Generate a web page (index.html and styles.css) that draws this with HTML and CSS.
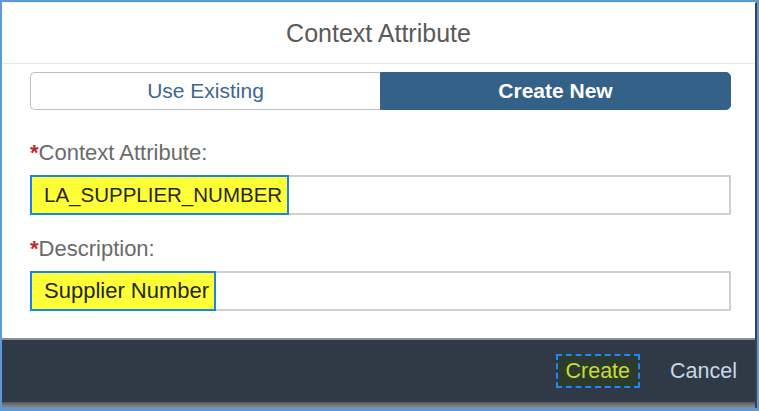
FILE: index.html
```html
<!DOCTYPE html>
<html lang="en">
<head>
  <meta charset="UTF-8" />
  <title>Context Attribute</title>
  <link rel="stylesheet" href="styles.css">
</head>
<body>

<div class="frame">
  <div class="dialog">
    <!-- Header -->
    <div class="dialog-header">Context Attribute</div>

    <!-- Content -->
    <div class="dialog-content">
      <div class="segmented">
        <button class="seg-btn">Use Existing</button>
        <button class="seg-btn selected">Create New</button>
      </div>

      <label class="field-label"><span class="req">*</span>Context Attribute:</label>
      <div class="field-input">
        <span class="highlight code">LA_SUPPLIER_NUMBER</span>
      </div>

      <label class="field-label"><span class="req">*</span>Description:</label>
      <div class="field-input">
        <span class="highlight">Supplier Number</span>
      </div>
    </div>

    <!-- Footer -->
    <div class="dialog-footer">
      <button class="footer-btn create">Create</button>
      <button class="footer-btn cancel">Cancel</button>
    </div>
    <div class="footer-shadow"></div>
  </div>
</div>

</body>
</html>
```

FILE: styles.css
```css
body {
  margin: 0;
  padding: 0;
  font-family: "Liberation Sans", Arial, sans-serif;
  background: #ffffff;
}
.frame {
  width: 759px;
  height: 411px;
  box-sizing: border-box;
  border: 2px solid #5b9ad8;
  border-bottom-width: 3px;
  background: #ffffff;
}
.dialog {
  height: 100%;
  display: flex;
  flex-direction: column;
  border-right: 2px solid #3c4048;
  border-top: 1px solid #eeeeee;
  box-sizing: border-box;
}
.dialog-header {
  height: 60px;
  display: flex;
  align-items: center;
  justify-content: center;
  font-size: 25px;
  color: #5a5a5a;
  border-bottom: 1px solid #e6e6e6;
}
.dialog-content {
  flex: 1;
  padding: 8px 24px 0 28px;
}
.segmented {
  display: flex;
  height: 38px;
}
.seg-btn {
  flex: 1;
  font-family: inherit;
  font-size: 21px;
  border: 1px solid #bfbfbf;
  background: #ffffff;
  color: #3d6890;
  padding: 0;
  margin: 0;
}
.seg-btn:first-child {
  border-radius: 5px 0 0 5px;
  border-right: none;
}
.seg-btn.selected {
  background: #346187;
  border-color: #346187;
  color: #ffffff;
  font-weight: bold;
  border-radius: 0 5px 5px 0;
}
.field-label {
  display: block;
  margin-top: 31px;
  font-size: 22px;
  color: #6a6a6a;
  line-height: 24px;
}
.field-label + .field-input {
  margin-top: 10px;
}
.field-input + .field-label {
  margin-top: 22px;
}
.req {
  color: #c0282e;
  font-weight: bold;
}
.field-input {
  height: 40px;
  box-sizing: border-box;
  border: 2px solid #cfcfcf;
  border-left: none;
  display: flex;
}
.highlight {
  display: flex;
  align-items: center;
  background: #ffff38;
  border: 2px solid #1a82f0;
  margin: -2px 0;
  padding: 0 5px 0 12px;
  font-size: 22px;
  color: #262626;
}
.highlight.code {
  font-size: 20.5px;
}
.dialog-footer {
  height: 62px;
  background: #2f3a46;
  display: flex;
  align-items: center;
  justify-content: flex-end;
  padding-right: 18px;
  gap: 30px;
  border-top: 2px solid #8a9099;
}
.footer-shadow {
  height: 6px;
  background: linear-gradient(#55595f, #8c9096);
}
.footer-btn {
  font-family: inherit;
  font-size: 21.5px;
  background: none;
  border: none;
  padding: 0;
}
.footer-btn.create {
  height: 34px;
  padding: 0 8px;
  background: #2c3a30;
  border: 2px dashed #1e88ff;
  color: #c8dd2e;
}
.footer-btn.cancel {
  color: #c8d7e8;
}
```
